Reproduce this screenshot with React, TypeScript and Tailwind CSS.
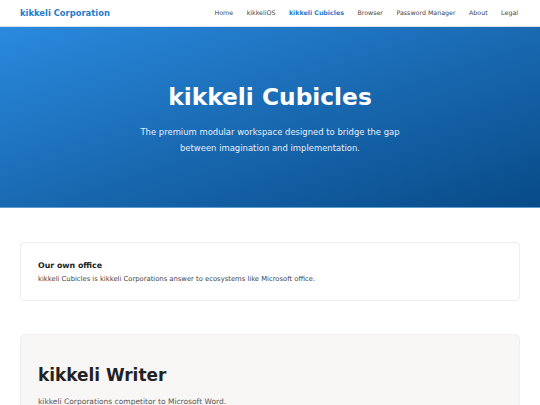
import React from "react";

const nav = ["Home", "kikkeliOS", "kikkeli Cubicles", "Browser", "Password Manager", "About", "Legal"];

export default function App() {
  return (
    <div className="min-h-screen bg-white" style={{ fontFamily: '"DejaVu Sans", Verdana, sans-serif' }}>
      <header className="h-[27px] flex items-center justify-between pl-[20px] pr-[22px] bg-white border-b border-[#d6e3ee]">
        <div className="text-[8.4px] font-bold text-[#1d7ccc]">kikkeli Corporation</div>
        <nav className="flex items-center gap-[13.5px] text-[6.3px] text-[#444]">
          {nav.map((n) => (
            <span key={n} className={n === "kikkeli Cubicles" ? "font-bold text-[#1d7ccc]" : ""}>
              {n}
            </span>
          ))}
        </nav>
      </header>
      <section className="h-[181px] flex flex-col items-center bg-gradient-to-br from-[#2a8ade] to-[#084b88] border-b border-[#5e9fcf]">
        <h1 className="mt-[55px] text-[23.3px] leading-[30px] font-bold text-white">kikkeli Cubicles</h1>
        <p className="mt-[12px] text-[8.45px] leading-[16px] text-center text-[#e6f0fa]">
          The premium modular workspace designed to bridge the gap
          <br />
          between imagination and implementation.
        </p>
      </section>
      <main className="px-[20px] pt-[34px]">
        <div className="w-[500px] h-[59px] rounded-[4px] border border-[#eeeeee] px-[17px] pt-[18px]">
          <h2 className="text-[7.87px] leading-[10px] font-bold text-[#222]">Our own office</h2>
          <p className="mt-[3px] text-[6.8px] leading-[10px] text-[#444]">
            kikkeli Cubicles is kikkeli Corporations answer to ecosystems like Microsoft office.
          </p>
        </div>
        <div className="mt-[33px] w-[500px] h-[120px] rounded-[5px] bg-[#f8f7f5] border border-[#f1f0ee] px-[17px] pt-[29px]">
          <h2 className="text-[16.9px] leading-[22px] font-bold text-[#222]">kikkeli Writer</h2>
          <p className="mt-[11px] text-[7.5px] leading-[10px] text-[#555]">
            kikkeli Corporations competitor to Microsoft Word.
          </p>
        </div>
      </main>
    </div>
  );
}
